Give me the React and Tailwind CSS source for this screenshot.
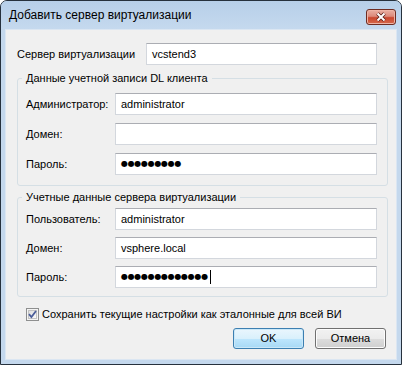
const ui = "font-['Liberation_Sans','Arial',sans-serif]";

function TextBox({ children, width = 'w-[262px]' }) {
  return (
    <div className={`flex h-[22px] ${width} items-center border border-[#d3d7dd] border-t-[#abadb3] bg-white pl-[5px] text-[11px] text-black`}>
      {children}
    </div>
  );
}

function Dots({ n }) {
  return (
    <span className="font-['DejaVu_Sans',sans-serif] text-[8px] leading-none tracking-[-0.3px]">
      {'●'.repeat(n)}
    </span>
  );
}

function Field({ label, children }) {
  return (
    <div className="flex items-center">
      <span className="w-[89px] text-[11px] text-black">{label}</span>
      <TextBox>{children}</TextBox>
    </div>
  );
}

function GroupBox({ title, children, pad }) {
  return (
    <fieldset className={`w-[371px] rounded-[3px] border border-[#d5dfe5] pr-[10px] pl-[8px] ${pad}`}>
      <legend className="-ml-1 px-1 text-[11px] leading-[16px] text-black">{title}</legend>
      {children}
    </fieldset>
  );
}

function CheckBox() {
  return (
    <svg width="13" height="13" viewBox="0 0 13 13">
      <defs>
        <linearGradient id="cb" x1="0" y1="0" x2="1" y2="1">
          <stop offset="0" stopColor="#dcdcdc" />
          <stop offset="1" stopColor="#fbfbfb" />
        </linearGradient>
      </defs>
      <rect x="0.5" y="0.5" width="12" height="12" fill="#f4f4f4" stroke="#8e8f8f" />
      <rect x="2.5" y="2.5" width="8" height="8" fill="url(#cb)" stroke="#c3c3c3" />
      <path d="M3 6.2 L5.4 9 L10 3" fill="none" stroke="#4a5d99" strokeWidth="1.8" />
    </svg>
  );
}

function Button({ children, primary }) {
  const look = primary
    ? 'border-[#3c7fb1] bg-[linear-gradient(#eaf6fd,#d9f0fc_50%,#bee6fd_50%,#a7d9f5)] shadow-[inset_0_0_0_1px_#cbe8f8]'
    : 'border-[#707070] bg-[linear-gradient(#f2f2f2,#ebebeb_50%,#dddddd_50%,#cfcfcf)] shadow-[inset_0_0_0_1px_#fcfcfc]';
  return (
    <div className={`flex h-[21px] w-[71px] items-center justify-center rounded-[3px] border text-[11px] text-black ${look}`}>
      {children}
    </div>
  );
}

export default function App() {
  return (
    <div className={`h-[365px] w-[402px] bg-white ${ui}`}>
      <div className="flex h-[365px] w-[402px] flex-col rounded-t-[7px] border border-[#26313d] bg-[#c4d8ed]">
        <div className="flex h-[28px] items-center justify-between rounded-t-[6px] bg-[linear-gradient(#b7cfe9,#c5d9ee)] pr-[5px] pl-[8px]">
          <span className="text-[12px] text-black">Добавить сервер виртуализации</span>
          <div className="mt-[4px] flex h-[16px] w-[30px] items-center justify-center rounded-[3px] border border-[#6e2c22] bg-[linear-gradient(#eab0a3,#dc8a7b_45%,#c9472f_55%,#d66a4c)] shadow-[inset_0_0_0_1px_#eeb4a6]">
            <svg width="12" height="10" viewBox="0 0 12 10">
              <path d="M2.5 1.5 L9.5 8.5 M9.5 1.5 L2.5 8.5" stroke="#5a1e16" strokeWidth="3.6" />
              <path d="M2.5 1.5 L9.5 8.5 M9.5 1.5 L2.5 8.5" stroke="#ffffff" strokeWidth="2" />
            </svg>
          </div>
        </div>

        <div className="mx-[4px] mb-[4px] flex flex-1 flex-col border border-[#dbe6f2] bg-[#f0f0f0] pl-[11px]">
          <div className="mt-[13px] flex items-center">
            <span className="w-[129px] text-[11px] text-black">Сервер виртуализации</span>
            <TextBox width="w-[231px]">vcstend3</TextBox>
          </div>

          <div className="mt-[5px]">
            <GroupBox title="Данные учетной записи DL клиента" pad="pb-[10px]">
              <div className="flex flex-col gap-[8px] pt-[7px]">
                <Field label="Администратор:">administrator</Field>
                <Field label="Домен:" />
                <Field label="Пароль:">
                  <Dots n={9} />
                </Field>
              </div>
            </GroupBox>
          </div>

          <div className="mt-[3px]">
            <GroupBox title="Учетные данные сервера виртуализации" pad="pb-[8px]">
              <div className="flex flex-col gap-[7px] pt-[3px]">
                <Field label="Пользователь:">administrator</Field>
                <Field label="Домен:">vsphere.local</Field>
                <Field label="Пароль:">
                  <Dots n={13} />
                  <span className="ml-[2px] h-[14px] w-px bg-black" />
                </Field>
              </div>
            </GroupBox>
          </div>

          <div className="mt-[9px] flex h-[16px] items-center gap-[3px] pl-[9px]">
            <CheckBox />
            <span className="text-[11px] text-black">Сохранить текущие настройки как эталонные для всей ВИ</span>
          </div>

          <div className="mt-[6px] flex justify-end gap-[11px] pr-[10px]">
            <Button primary>OK</Button>
            <Button>Отмена</Button>
          </div>
        </div>
      </div>
    </div>
  );
}
